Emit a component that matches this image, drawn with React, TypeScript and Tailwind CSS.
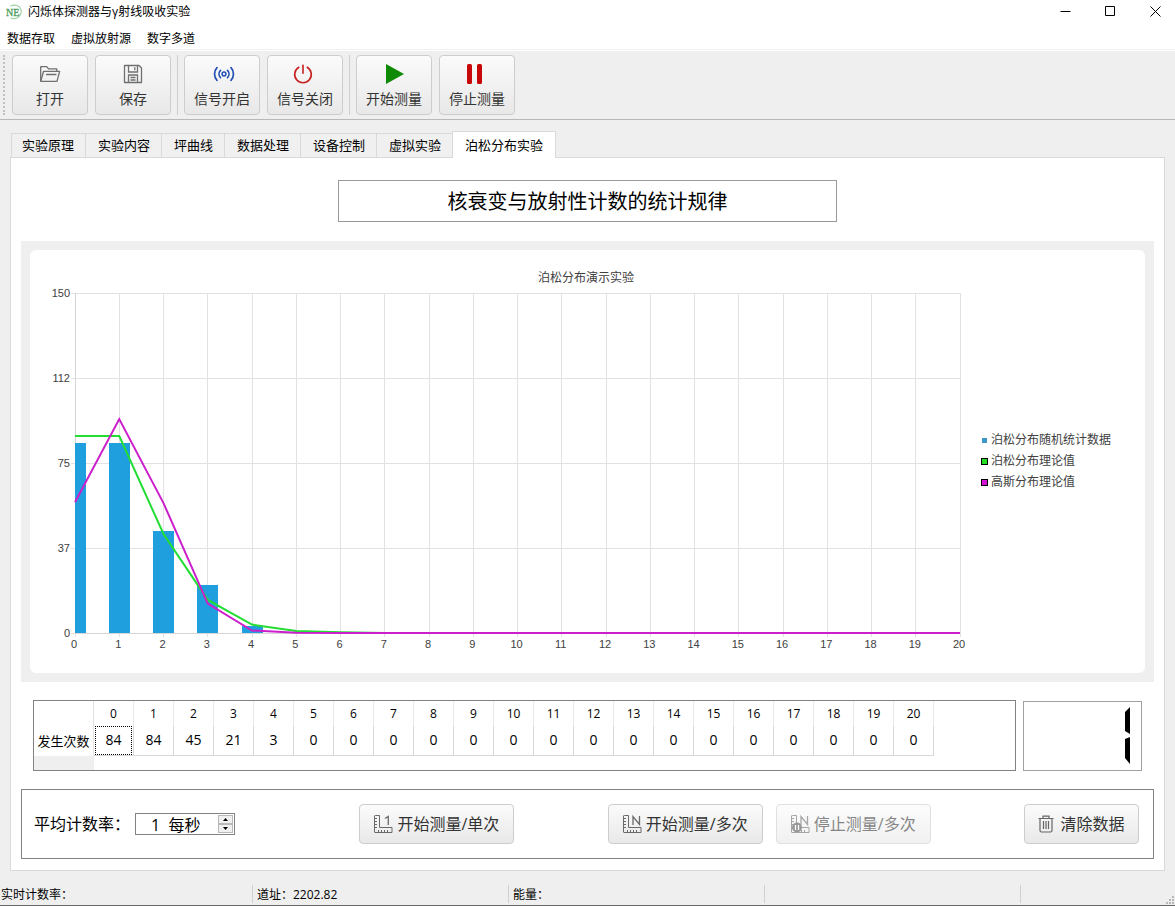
import React from "react";

const counts = [84, 84, 45, 21, 3, 0, 0, 0, 0, 0, 0, 0, 0, 0, 0, 0, 0, 0, 0, 0, 0];
const poisson = [86.9, 86.9, 43.7, 14.6, 3.7, 0.9, 0.3];
const gauss = [57.7, 94.4, 57.3, 13, 1.1, 0.1];

const tabs = ["实验原理", "实验内容", "坪曲线", "数据处理", "设备控制", "虚拟实验", "泊松分布实验"];

const buttonLook =
  "rounded border border-[#cdcdcd] bg-linear-to-b from-[#fbfbfb] to-[#e8e8e8] text-[#333]";

/* ---------- icons ---------- */

const LogoIcon = () => (
  <svg width="16" height="16" viewBox="0 0 16 16" fill="none">
    <path d="M4.500 2.300C8 0 13 1.200 14.700 4.800c1.400 3.400-.2 7.400-3.700 9.200-2 .9-4.500.8-6.500-.3" stroke="#9ad3a0" strokeWidth="1.100" />
    <text x="0" y="11.500" fontSize="10" fontFamily="Liberation Serif, serif" fill="#4c9e5c" stroke="#4c9e5c" strokeWidth=".3">
      NE
    </text>
  </svg>
);

const FolderIcon = () => (
  <svg width="22" height="18" viewBox="0 0 22 18" fill="none" stroke="#707070" strokeWidth="1.3" strokeLinejoin="round">
    <path d="M1.700 16.300V1.700h6l1.800 2.200h8.300v2.300" />
    <path d="M1.700 16.300 4.600 6.300h16L18 16.300z" />
    <path d="M7.500 9.500h9.500" strokeLinecap="round" />
  </svg>
);

const SaveIcon = () => (
  <svg width="20" height="20" viewBox="0 0 20 20" fill="none" stroke="#707070" strokeWidth="1.3">
    <path d="M1.500 1.500h14.500l2.500 2.500v14.500h-17z" strokeLinejoin="round" />
    <path d="M5.500 1.500v6.500h9V1.500M11.800 3.200v3" />
    <path d="M5.500 18.500v-7.500h9v7.500M7.500 13.500h5M7.500 16h5" />
  </svg>
);

const SignalIcon = () => (
  <svg width="26" height="16" viewBox="0 0 26 16" fill="none" stroke="#2450b4" strokeWidth="1.7" strokeLinecap="round">
    <circle cx="15" cy="8" r="1.900" strokeWidth="1.500" />
    <path d="M11.500 4.300a5.400 5.400 0 0 0 0 7.400M18.500 4.300a5.400 5.400 0 0 1 0 7.400" />
    <path d="M8 1.700a9.300 9.300 0 0 0 0 12.600M22 1.700a9.300 9.300 0 0 1 0 12.600" />
  </svg>
);

const PowerIcon = () => (
  <svg width="24" height="20" viewBox="0 0 24 20" fill="none" stroke="#c62020" strokeWidth="1.600" strokeLinecap="round">
    <path d="M10 1.200v8" />
    <path d="M5.800 3.300a8.300 8.300 0 1 0 8.400 0" />
  </svg>
);

const PlayIcon = () => (
  <svg width="20" height="20" viewBox="0 0 20 20">
    <path d="M2 0v20L20 10z" fill="#0f8a06" />
  </svg>
);

const PauseIcon = () => (
  <svg width="20" height="20" viewBox="0 0 20 20" fill="#c80808">
    <rect x="0" y="0" width="5" height="20" rx="1.500" />
    <rect x="10" y="0" width="5" height="20" rx="1.500" />
  </svg>
);

const RulerIcon = ({ mark, paused }: { mark: string; paused?: boolean }) => (
  <svg width="20" height="20" viewBox="0 0 20 20" fill="none" stroke="#6a6a6a">
    <path d="M1.500 1.500h4v12h12.500v5H1q-.5 0-.5-.5V2q0-.5.500-.5z" strokeLinejoin="round" />
    <path d="M1 4.500h2M1 7.500h2M1 10.500h2M1 13.500h2M4.500 18v-2M7.500 18v-2M10.500 18v-2M13.500 18v-2" />
    {mark === "1" ? (
      <path d="M11 4.500 14.300 2.500V11" strokeWidth="1.300" />
    ) : (
      <path d="M10 11V2.500l6.500 8V2" strokeWidth="1.300" />
    )}
    {paused && (
      <>
        <circle cx="6" cy="13.500" r="5" fill="#555" stroke="none" />
        <path d="M4.500 11v5M7.500 11v5" stroke="#fff" strokeWidth="1.300" />
      </>
    )}
  </svg>
);

const TrashIcon = () => (
  <svg width="16" height="18" viewBox="0 0 16 18" fill="none" stroke="#666" strokeWidth="1.200">
    <path d="M.5 3.500h15M5 3.500V1.200h6v2.300" />
    <path d="M2 3.500v12q0 1.500 1.500 1.500h9q1.500 0 1.500-1.500v-12" />
    <path d="M5.500 6v8M8 6v8M10.500 6v8" />
  </svg>
);

/* ---------- toolbar ---------- */

const ToolButton = ({ icon, label }: { icon: React.ReactNode; label: string }) => (
  <button className={`flex h-[60px] w-[76px] flex-col items-center ${buttonLook}`}>
    <span className="mt-2 flex h-5 items-center">{icon}</span>
    <span className="mt-[5px] text-sm leading-5">{label}</span>
  </button>
);

const Separator = () => <span className="-mx-px h-[60px] w-px bg-[#cfcfcf]" />;

/* ---------- chart ---------- */

const LEFT = 45;
const TOP = 43;
const BOTTOM = 383;
const STEP = 44.25;

const xAt = (n: number) => LEFT + n * STEP;
const yAt = (v: number) => BOTTOM - (v * (BOTTOM - TOP)) / 150;

const linePoints = (values: number[]) =>
  counts.map((_, i) => `${xAt(i)},${yAt(values[i] ?? 0)}`).join(" ");

const yLabels = ["150", "112", "75", "37", "0"];

const legend = [
  { text: "泊松分布随机统计数据", color: "#3d98c8", outlined: false },
  { text: "泊松分布理论值", color: "#22dd22", outlined: true },
  { text: "高斯分布理论值", color: "#d414d4", outlined: true },
];

const Chart = () => (
  <svg viewBox="0 0 1115 423" className="block h-auto w-full rounded-md bg-white" fill="#404040">
    <text x="556" y="32" fontSize="12" textAnchor="middle">
      泊松分布演示实验
    </text>

    <g stroke="#e2e2e2" shapeRendering="crispEdges">
      {counts.map((_, i) => (
        <line key={i} x1={xAt(i)} y1={TOP} x2={xAt(i)} y2={BOTTOM + 4} />
      ))}
      {yLabels.map((label, i) => (
        <line key={label} x1={LEFT - 4} y1={TOP + i * 85 + 0.5} x2={xAt(20)} y2={TOP + i * 85 + 0.5} />
      ))}
    </g>
    <path d="M45.500 43v340M45 383.500h885" stroke="#d6d6d6" />

    {counts.map((value, i) => {
      const start = Math.max(xAt(i) - 10.5, LEFT);
      return (
        <rect
          key={i}
          x={start}
          y={yAt(value)}
          width={xAt(i) + 10.5 - start}
          height={BOTTOM - yAt(value)}
          fill="#209fdf"
          shapeRendering="crispEdges"
        />
      );
    })}
    <polyline points={linePoints(poisson)} fill="none" stroke="#22dd32" strokeWidth="2" />
    <polyline points={linePoints(gauss)} fill="none" stroke="#cc1fcc" strokeWidth="2" />

    <g fontSize="11" fontFamily="Liberation Sans, sans-serif">
      {yLabels.map((label, i) => (
        <text key={label} x="40" y={TOP + i * 85 + 4} textAnchor="end">
          {label}
        </text>
      ))}
      {counts.map((_, i) => (
        <text key={i} x={xAt(i) - 1} y="398" textAnchor="middle">
          {i}
        </text>
      ))}
    </g>

    {legend.map((item, i) => (
      <g key={item.text}>
        <rect
          x={item.outlined ? 951.5 : 952}
          y={item.outlined ? 187.5 + i * 21 : 188}
          width={item.outlined ? 6 : 5}
          height={item.outlined ? 6 : 5}
          fill={item.color}
          stroke={item.outlined ? "#000" : "none"}
        />
        <text x="961" y={194 + i * 21} fontSize="12">
          {item.text}
        </text>
      </g>
    ))}
  </svg>
);

/* ---------- data table ---------- */

const CountTable = () => (
  <div className="h-[71px] min-w-0 flex-1 overflow-hidden border border-[#828282]">
    <table className="table-fixed border-separate border-spacing-0 text-center text-black">
      <thead>
        <tr className="h-[25px] text-xs">
          <td className="w-[60px] border-r border-[#e2e2e2]" />
          {counts.map((_, i) => (
            <th key={i} scope="col" className="w-10 border-r border-[#e8e8e8] p-0 font-normal">
              {i}
            </th>
          ))}
        </tr>
      </thead>
      <tbody>
        <tr className="text-sm leading-5">
          <th scope="row" className="border-r border-[#e2e2e2] p-0 text-[13px] font-normal">
            发生次数
          </th>
          {counts.map((value, i) => (
            <td key={i} className="border-r border-b border-[#d8d8d8] p-0">
              <span
                className={`mx-px block border border-dotted pt-[3px] pb-1 ${i === 0 ? "border-black" : "border-transparent"}`}
              >
                {value}
              </span>
            </td>
          ))}
        </tr>
      </tbody>
    </table>
    <div className="h-4 w-[60px] bg-[#efefef]" />
  </div>
);

const LcdDisplay = () => (
  <div className="flex h-[70px] w-[119px] justify-end self-end border border-[#a0a0a0] pt-[5px] pr-[11px]">
    <svg width="6" height="58" viewBox="0 0 6 58" role="img" aria-label="1">
      <path d="M6 0 1 5v19l5 3zM6 30l-5 2v19l5 6z" fill="#000" />
    </svg>
  </div>
);

/* ---------- bottom controls ---------- */

const ActionButton = ({
  icon,
  label,
  width,
  disabled,
}: {
  icon: React.ReactNode;
  label: string;
  width: string;
  disabled?: boolean;
}) => (
  <button
    disabled={disabled}
    className={`flex h-10 shrink-0 items-center justify-center gap-[3px] text-base disabled:opacity-60 ${width} ${buttonLook}`}
  >
    {icon}
    {label}
  </button>
);

const RateInput = () => (
  <div className="ml-[5px] flex h-[22px] w-[100px] shrink-0 border border-[#828282] p-px">
    <input
      id="rate"
      type="text"
      defaultValue="1  每秒"
      className="min-w-0 flex-1 pl-3.5 text-base leading-4 text-black outline-none"
    />
    <div className="flex w-[15px] flex-col">
      <button aria-label="增加" className="flex flex-1 items-center justify-center border border-[#b8b8b8] bg-[#f0f0f0]">
        <svg width="5" height="3" viewBox="0 0 5 3">
          <path d="M2.500 0 5 3H0z" />
        </svg>
      </button>
      <button aria-label="减少" className="flex flex-1 items-center justify-center border border-[#b8b8b8] bg-[#f0f0f0]">
        <svg width="5" height="3" viewBox="0 0 5 3">
          <path d="M0 0h5L2.500 3z" />
        </svg>
      </button>
    </div>
  </div>
);

const Controls = () => (
  <div className="mt-[18px] flex h-[70px] items-center border border-[#828282] pr-3.5 pl-3">
    <label htmlFor="rate" className="shrink-0 text-base whitespace-nowrap text-black">
      平均计数率：
    </label>
    <RateInput />
    <span className="flex-[4]" />
    <ActionButton width="w-[155px]" icon={<RulerIcon mark="1" />} label="开始测量/单次" />
    <span className="flex-[3]" />
    <ActionButton width="w-[155px]" icon={<RulerIcon mark="N" />} label="开始测量/多次" />
    <span className="w-[13px]" />
    <ActionButton width="w-[155px]" icon={<RulerIcon mark="N" paused />} label="停止测量/多次" disabled />
    <span className="flex-[3]" />
    <ActionButton width="w-[115px]" icon={<span className="mr-[3px]"><TrashIcon /></span>} label="清除数据" />
  </div>
);

const App: React.FC = () => {
  return (
    <div className="flex min-h-screen flex-col bg-[#efefef] font-['Open_Sans','Noto_Sans_CJK_SC',sans-serif] text-black">
      {/* Title bar */}
      <header className="flex h-6 items-center bg-white pl-1.5 text-xs">
        <LogoIcon />
        <h1 className="ml-1.5">闪烁体探测器与γ射线吸收实验</h1>
        <div className="ml-auto flex h-full gap-[5px] pb-px">
          <button aria-label="最小化" className="flex w-10 items-center justify-center">
            <svg width="11" height="11" viewBox="0 0 11 11" stroke="#000">
              <path d="M.5 5.500h10" />
            </svg>
          </button>
          <button aria-label="最大化" className="flex w-10 items-center justify-center">
            <svg width="11" height="11" viewBox="0 0 11 11" stroke="#000" fill="none">
              <path d="M.5.500h9v9h-9z" />
            </svg>
          </button>
          <button aria-label="关闭" className="flex w-10 items-center justify-center">
            <svg width="11" height="11" viewBox="0 0 11 11" stroke="#000">
              <path d="m.5.500 10 10M10.500.500l-10 10" />
            </svg>
          </button>
        </div>
      </header>

      {/* Menu */}
      <nav className="border-b border-white bg-white">
        <div className="flex h-[26px] items-center gap-4 border-b border-[#f0f0f0] pt-1 pl-[7px] text-xs">
          <button>数据存取</button>
          <button>虚拟放射源</button>
          <button>数字多道</button>
        </div>
      </nav>

      {/* Toolbar */}
      <div className="flex items-center gap-[7px] border-b border-[#b8b8b8] py-1 pl-[3px]">
        <span className="h-[60px] border-l-2 border-dotted border-[#c0c0c0]" />
        <ToolButton icon={<FolderIcon />} label="打开" />
        <ToolButton icon={<SaveIcon />} label="保存" />
        <Separator />
        <ToolButton icon={<SignalIcon />} label="信号开启" />
        <ToolButton icon={<PowerIcon />} label="信号关闭" />
        <Separator />
        <ToolButton icon={<PlayIcon />} label="开始测量" />
        <ToolButton icon={<PauseIcon />} label="停止测量" />
      </div>

      <main className="mx-2.5 flex flex-1 flex-col pt-[11px]">
        {/* Tabs */}
        <div role="tablist" className="relative -mb-px flex items-end pl-px text-[13px]">
          {tabs.map((tab, i) =>
            i === tabs.length - 1 ? (
              <button
                key={tab}
                role="tab"
                aria-selected="true"
                className="h-[27px] border border-b-0 border-[#d9d9d9] bg-white px-3 pt-0.5"
              >
                {tab}
              </button>
            ) : (
              <button
                key={tab}
                role="tab"
                aria-selected="false"
                className={`h-[25px] border-t border-b border-l border-[#d9d9d9] bg-[#f0f0f0] pt-px ${i === 0 ? "pr-[11px] pl-2.5" : "pr-[11px] pl-3"}`}
              >
                {tab}
              </button>
            )
          )}
        </div>

        {/* Experiment page */}
        <section className="flex-1 border border-[#d9d9d9] bg-white px-2.5 pt-[22px] pb-[11px]">
          <h2 className="mx-auto flex h-[42px] w-[499px] items-center justify-center border border-[#999] pt-0.5 text-xl">
            核衰变与放射性计数的统计规律
          </h2>
          <div className="mt-[19px] bg-[#efefef] p-[9px]">
            <Chart />
          </div>
          <div className="mt-[18px] mr-3 ml-3 flex gap-[7px]">
            <CountTable />
            <LcdDisplay />
          </div>
          <Controls />
        </section>
      </main>

      {/* Status bar */}
      <footer className="flex h-[35px] items-end border-b border-[#666] text-xs">
        <div className="mb-0.5 flex h-[18px] w-[253px] items-center border-r border-[#d0d0d0] pt-0.5 pl-px">实时计数率：</div>
        <div className="mb-0.5 flex h-[18px] w-64 items-center border-r border-[#d0d0d0] pt-0.5 pl-1">道址：2202.82</div>
        <div className="mb-0.5 flex h-[18px] w-64 items-center border-r border-[#d0d0d0] pt-0.5 pl-1">能量：</div>
        <div className="mb-0.5 h-[18px] w-64 border-r border-[#d0d0d0]" />
        <svg className="ml-auto" width="9" height="9" viewBox="0 0 9 9" fill="#b8b8b8">
          <path d="M6 0h2v2H6zM3 3h2v2H3zM6 3h2v2H6zM0 6h2v2H0zM3 6h2v2H3zM6 6h2v2H6z" />
        </svg>
      </footer>
    </div>
  );
};

export default App;
